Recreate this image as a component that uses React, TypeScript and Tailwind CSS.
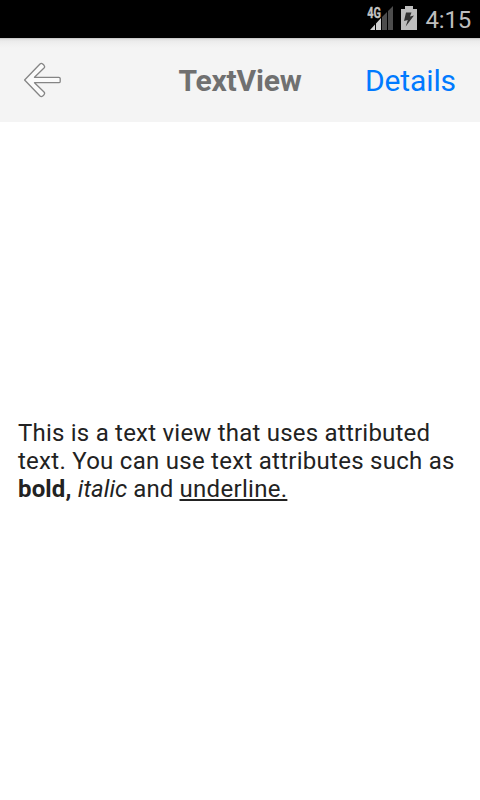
export default function App() {
  return (
    <div className="flex h-[800px] w-[480px] flex-col overflow-hidden bg-white font-[Roboto,sans-serif]">
      <div className="flex h-[38px] shrink-0 items-start justify-end bg-black pr-[9px]">
        <svg width="26" height="26" viewBox="367 5 26 26" className="mt-[5px] mr-[8px]">
          <path d="M370 30L375 24.5V30Z M376 23.5L381 18V30H376Z" fill="#d0d0d0" />
          <path d="M382 17L387 12V30H382Z M388 11L393 6V30H388Z" fill="#4d4d4d" />
          <text x="367.3" y="17.8" fontSize="14.5" fontWeight="700" fill="#c4c4c4" stroke="#c4c4c4" strokeWidth="0.3" textLength="13.7" lengthAdjust="spacingAndGlyphs">4G</text>
        </svg>
        <svg width="16" height="24" viewBox="0 0 16 24" className="mt-[6px] mr-[9px]">
          <path d="M4 0H12V3H16V24H0V3H4Z" fill="#bebebe" />
          <path d="M5 6.5H10.5L9 10.5L13 9.5L4.7 20.5L6.8 14L3 15Z" fill="#333" />
        </svg>
        <span className="pt-px text-[24px] leading-[38px] tracking-[-0.2px] text-[#bebebe]">4:15</span>
      </div>
      <header className="grid h-[84px] shrink-0 grid-cols-3 items-center bg-[#f4f4f4] bg-[linear-gradient(#b8b8b8_0px,#dedede_1px,#ebebeb_3px,#f0f0f0_6px,#f4f4f4_10px)] px-6">
        <svg width="38" height="36" viewBox="24 62 38 36" fill="#fafafa" stroke="#858585" strokeWidth="1.3" strokeLinejoin="round">
          <path d="M24.6 80L40 64Q41.3 62.8 42.7 64L44 65.3Q45.2 66.7 44 68L34.5 77.3H58.8Q60.2 77.3 60.2 78.6V81.4Q60.2 82.7 58.8 82.7H34.5L44 92Q45.2 93.3 44 94.7L42.7 96Q41.3 97.2 40 96Z" />
        </svg>
        <h1 className="text-center text-[30px] font-bold tracking-[-0.2px] text-[#707070]">TextView</h1>
        <button className="text-right text-[30px] tracking-[-0.1px] text-[#007aff]">Details</button>
      </header>
      <main className="flex flex-1 flex-col justify-center px-[18px] text-[24px] leading-[28px] tracking-[0.27px] text-[#222]">
        <p className="whitespace-nowrap"><span className="tracking-[0.22px]">This is a text view that uses attributed</span><br />text. You can use text attributes such as<br /><b className="tracking-[0.15px]">bold,</b> <i className="tracking-normal">italic</i><span className="tracking-[0.1px]"> and </span><u className="tracking-[0.3px] decoration-[1.5px] underline-offset-2">underline.</u></p>
      </main>
    </div>
  );
}
